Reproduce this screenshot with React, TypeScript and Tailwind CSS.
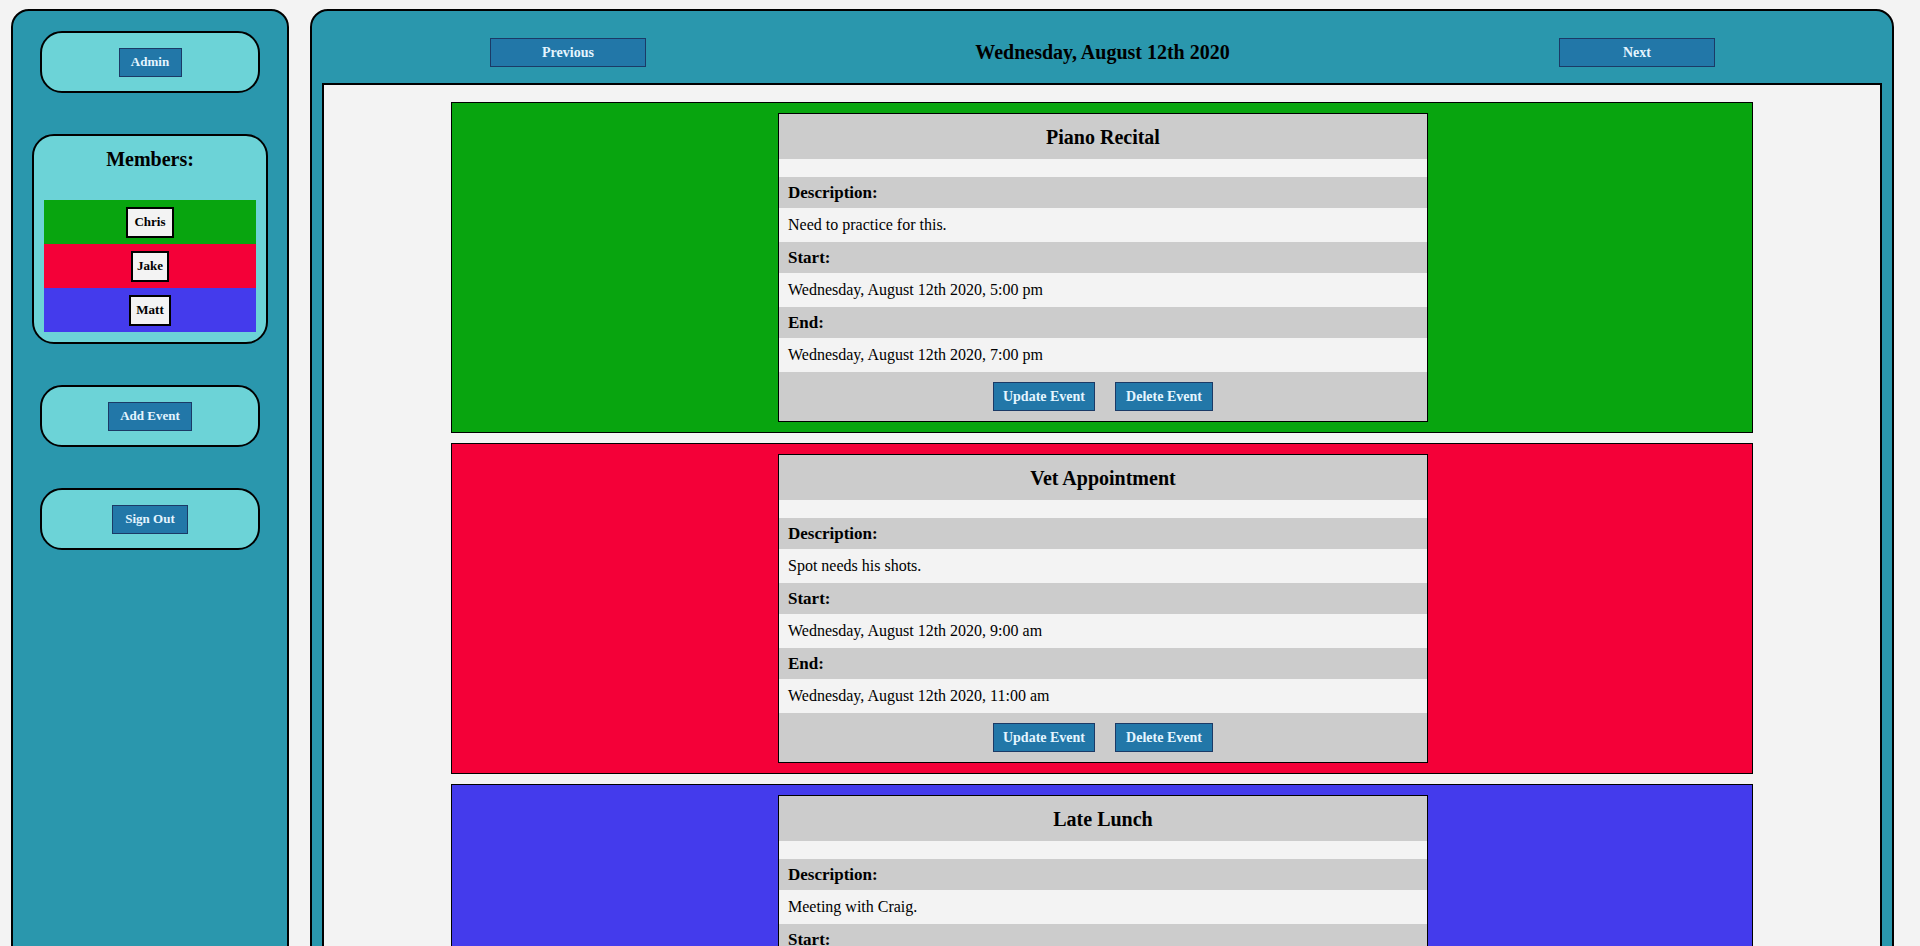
const members = [
  { name: "Chris", color: "bg-[#08a50f]", w: "w-[48px]" },
  { name: "Jake", color: "bg-[#f40038]", w: "w-[38px]" },
  { name: "Matt", color: "bg-[#443bec]", w: "w-[42px]" },
];

const events = [
  {
    title: "Piano Recital",
    description: "Need to practice for this.",
    start: "Wednesday, August 12th 2020, 5:00 pm",
    end: "Wednesday, August 12th 2020, 7:00 pm",
    color: "bg-[#08a50f]",
  },
  {
    title: "Vet Appointment",
    description: "Spot needs his shots.",
    start: "Wednesday, August 12th 2020, 9:00 am",
    end: "Wednesday, August 12th 2020, 11:00 am",
    color: "bg-[#f40038]",
  },
  {
    title: "Late Lunch",
    description: "Meeting with Craig.",
    start: "Wednesday, August 12th 2020, 1:00 pm",
    end: "Wednesday, August 12th 2020, 2:30 pm",
    color: "bg-[#443bec]",
  },
];

const btn =
  "flex h-[29px] items-center justify-center border border-[#1b3a66] bg-[#2277a8] text-[14px] font-bold text-[#e4f5ff]";

function SideBox({ label, width }: { label: string; width: string }) {
  return (
    <div className="flex h-[62px] w-[220px] items-center justify-center rounded-[22px] border-2 border-black bg-[#6cd3d7]">
      <button className={`${btn} ${width} !text-[13px]`}>{label}</button>
    </div>
  );
}

function EventCard({ ev }: { ev: (typeof events)[number] }) {
  return (
    <div className={`h-[331px] w-[1302px] shrink-0 border border-black p-[10px] pl-[326px] ${ev.color}`}>
      <div className="w-[650px] border border-black bg-[#cccccc]">
        <div className="flex h-[45px] items-center justify-center text-[20px] font-bold">
          {ev.title}
        </div>
        <div className="h-[18px] bg-[#f3f3f3]" />
        <div className="flex h-[31px] items-center pl-[9px] text-[17px] font-bold">Description:</div>
        <div className="flex h-[34px] items-center bg-[#f3f3f3] pl-[9px] text-[16px]">{ev.description}</div>
        <div className="flex h-[31px] items-center pl-[9px] text-[17px] font-bold">Start:</div>
        <div className="flex h-[34px] items-center bg-[#f3f3f3] pl-[9px] text-[16px]">{ev.start}</div>
        <div className="flex h-[31px] items-center pl-[9px] text-[17px] font-bold">End:</div>
        <div className="flex h-[34px] items-center bg-[#f3f3f3] pl-[9px] text-[16px]">{ev.end}</div>
        <div className="flex h-[49px] items-center justify-center gap-[20px]">
          <button className={`${btn} w-[102px]`}>Update Event</button>
          <button className={`${btn} w-[98px]`}>Delete Event</button>
        </div>
      </div>
    </div>
  );
}

export default function App() {
  return (
    <div className="h-screen overflow-y-scroll bg-[#f3f3f3] font-['Liberation_Serif',serif] text-black">
      <div className="flex w-[1905px] gap-[21px] px-[11px] pt-[9px] pb-[10px]">
        <aside className="flex w-[278px] shrink-0 flex-col items-center gap-[41px] rounded-[18px] border-2 border-black bg-[#2a97ad] pt-[20px]">
          <SideBox label="Admin" width="w-[63px]" />

          <div className="w-[236px] rounded-[22px] border-2 border-black bg-[#6cd3d7] px-[10px] pt-[10px] pb-[10px]">
            <h3 className="text-center text-[20px] leading-[26px] font-bold">Members:</h3>
            <div className="mt-[28px]">
              {members.map((m) => (
                <div key={m.name} className={`flex h-[44px] items-center justify-center ${m.color}`}>
                  <span
                    className={`flex h-[31px] items-center justify-center border-2 border-black bg-[#f3f3f3] text-[13px] font-bold ${m.w}`}
                  >
                    {m.name}
                  </span>
                </div>
              ))}
            </div>
          </div>

          <SideBox label="Add Event" width="w-[84px]" />
          <SideBox label="Sign Out" width="w-[76px]" />
        </aside>

        <main className="w-[1584px] rounded-[18px] border-2 border-black bg-[#2a97ad] px-[10px] pb-[10px]">
          <div className="flex h-[72px] items-start justify-between pt-[27px] pr-[167px] pl-[168px]">
            <button className={`${btn} w-[156px]`}>Previous</button>
            <h2 className="text-[20px] leading-[29px] font-bold">Wednesday, August 12th 2020</h2>
            <button className={`${btn} w-[156px]`}>Next</button>
          </div>
          <div className="flex flex-col items-center gap-[10px] border-2 border-black bg-[#f3f3f3] pt-[17px] pb-[17px]">
            {events.map((ev) => (
              <EventCard key={ev.title} ev={ev} />
            ))}
          </div>
        </main>
      </div>
    </div>
  );
}
